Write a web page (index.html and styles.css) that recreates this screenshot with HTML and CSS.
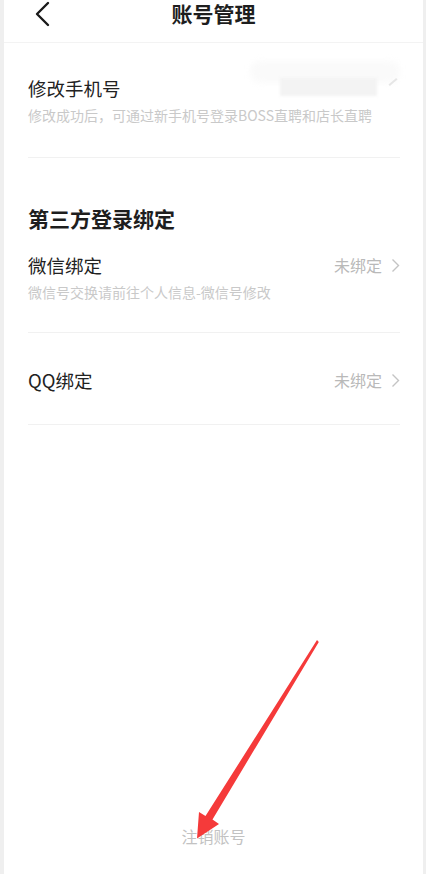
FILE: index.html
```html
<!DOCTYPE html>
<html lang="zh-CN">
<head>
<meta charset="utf-8">
<title>账号管理</title>
<link rel="stylesheet" href="styles.css">
</head>
<body>
<div class="page">
  <header class="header">
    <svg class="back" width="16" height="26" viewBox="0 0 16 26"><polyline points="13,2 2,13 13,24" fill="none" stroke="#1a1a1a" stroke-width="2.4" stroke-linecap="round" stroke-linejoin="round"/></svg>
    <h1 class="title">账号管理</h1>
  </header>

  <section class="block first">
    <div class="row">
      <span class="label">修改手机号</span>
      <span class="phone">
        <span class="blur-wide"></span>
        <span class="blur-box"></span>
        <span class="faint-arrow"></span>
      </span>
    </div>
    <p class="sub">修改成功后，可通过新手机号登录BOSS直聘和店长直聘</p>
  </section>

  <section class="block second">
    <h2 class="section-title">第三方登录绑定</h2>
    <div class="row wx">
      <span class="label">微信绑定</span>
      <span class="status">未绑定<svg class="chev" width="9" height="15" viewBox="0 0 9 15"><polyline points="1.5,1.5 7.5,7.5 1.5,13.5" fill="none" stroke="#c4c4c4" stroke-width="1.4"/></svg></span>
    </div>
    <p class="sub">微信号交换请前往个人信息-微信号修改</p>
  </section>

  <section class="block third">
    <div class="row">
      <span class="label">QQ绑定</span>
      <span class="status">未绑定<svg class="chev" width="9" height="15" viewBox="0 0 9 15"><polyline points="1.5,1.5 7.5,7.5 1.5,13.5" fill="none" stroke="#c4c4c4" stroke-width="1.4"/></svg></span>
    </div>
  </section>

  <footer class="footer">注销账号</footer>

  <svg class="arrow" width="426" height="874" viewBox="0 0 426 874"><polygon points="317,640 318.8,642 212.5,819.5 219,824 197,838.5 199,812 205.5,816" fill="#f53a3a"/></svg>
</div>
</body>
</html>
```
FILE: styles.css
```css
* { box-sizing: border-box; margin: 0; padding: 0; }
html, body { height: 100%; }
body {
  background: #efefef;
  font-family: "Noto Sans CJK SC", "Noto Sans", sans-serif;
  color: #222;
}
.page {
  position: relative;
  margin: 0 3px 0 4px;
  min-height: 874px;
  background: #fff;
  display: flex;
  flex-direction: column;
}
.header {
  height: 43px;
  border-bottom: 1px solid #f3f3f3;
  position: relative;
  display: flex;
  justify-content: center;
}
.back {
  position: absolute;
  left: 31px;
  top: 1px;
}
.title {
  font-size: 21px;
  font-weight: 700;
  line-height: 27px;
  color: #1e1e1e;
}
.block {
  margin: 0 23px 0 24px;
  border-bottom: 1px solid #f1f1f1;
}
.first { padding: 32px 0 32px; }
.second { padding: 46px 0 30px; }
.third { padding: 34px 0 31px; }
.row {
  display: flex;
  align-items: center;
  justify-content: space-between;
  height: 26px;
}
.label {
  font-size: 18.5px;
  line-height: 26px;
  color: #222;
}
.sub {
  margin-top: 4px;
  font-size: 14px;
  line-height: 20px;
  color: #c9c9c9;
}
.section-title {
  font-size: 21px;
  font-weight: 700;
  line-height: 28px;
  color: #1e1e1e;
  margin-bottom: 20px;
}
.status {
  display: flex;
  align-items: center;
  gap: 9px;
  font-size: 16px;
  color: #b9b9b9;
}
.phone {
  position: relative;
  width: 150px;
  height: 26px;
}
.blur-wide {
  position: absolute;
  left: 0; right: 0; top: -14px; height: 22px;
  background: #fafafa;
  border-radius: 12px;
  filter: blur(3px);
}
.blur-box {
  position: absolute;
  left: 30px; width: 97px; top: 3px; height: 18px;
  background: #f3f3f3;
  filter: blur(1.5px);
}
.faint-arrow {
  position: absolute;
  right: 2px; top: 6px;
  width: 10px; height: 2px;
  background: #e6e6e6;
  transform: rotate(-40deg);
}
.footer {
  margin-top: auto;
  text-align: center;
  font-size: 16px;
  line-height: 22px;
  color: #c2c2c2;
  padding-bottom: 27px;
}
.arrow {
  position: absolute;
  left: -4px;
  top: 0;
  pointer-events: none;
}
```
